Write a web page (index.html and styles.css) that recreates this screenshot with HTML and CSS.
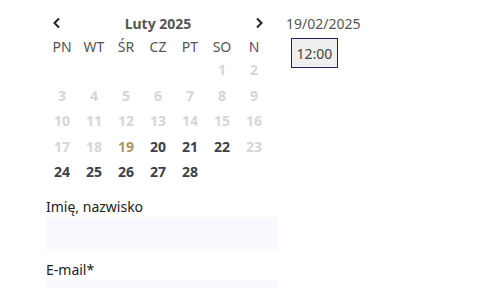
FILE: index.html
```html
<!DOCTYPE html>
<html lang="pl">
<head>
    <meta charset="UTF-8">
    <meta name="viewport" content="width=device-width, initial-scale=1.0">
    <title>Rezerwacja</title>
    <link rel="stylesheet" href="styles.css">
</head>
<body>
    <div class="booking">
        <div class="picker">
            <div class="calendar">
                <div class="cal-header">
                    <button class="nav" aria-label="Poprzedni miesiąc">
                        <svg width="10" height="12" viewBox="0 0 10 12"><path d="M7 1.5 2.5 6 7 10.5" fill="none" stroke="#222" stroke-width="2"/></svg>
                    </button>
                    <div class="month">Luty 2025</div>
                    <button class="nav" aria-label="Następny miesiąc">
                        <svg width="10" height="12" viewBox="0 0 10 12"><path d="M3 1.5 7.5 6 3 10.5" fill="none" stroke="#222" stroke-width="2"/></svg>
                    </button>
                </div>
                <div class="grid weekdays">
                    <span>PN</span><span>WT</span><span>ŚR</span><span>CZ</span><span>PT</span><span>SO</span><span>N</span>
                </div>
                <div class="grid days">
                    <span></span><span></span><span></span><span></span><span></span>
                    <span class="off">1</span><span class="off">2</span>
                    <span class="off">3</span><span class="off">4</span><span class="off">5</span><span class="off">6</span><span class="off">7</span><span class="off">8</span><span class="off">9</span>
                    <span class="off">10</span><span class="off">11</span><span class="off">12</span><span class="off">13</span><span class="off">14</span><span class="off">15</span><span class="off">16</span>
                    <span class="off">17</span><span class="off">18</span><span class="today">19</span><span>20</span><span>21</span><span>22</span><span class="off">23</span>
                    <span>24</span><span>25</span><span>26</span><span>27</span><span>28</span>
                </div>
            </div>
            <div class="slots">
                <div class="date">19/02/2025</div>
                <button class="slot">12:00</button>
            </div>
        </div>
        <form class="form">
            <label for="name">Imię, nazwisko</label>
            <input type="text" id="name">
            <label for="email">E-mail*</label>
            <input type="email" id="email">
        </form>
    </div>
</body>
</html>
```

FILE: styles.css
```css
:root {
    --text-color: #555;
    --day-color: #3d4047;
    --off-color: #d6d6d6;
    --accent-color: #ae9860;
    --field-color: #faf8ff;
}
body {
    margin: 0;
    font-family: 'Noto Sans', 'Open Sans', sans-serif;
    color: var(--text-color);
    background: #fff;
}
.booking {
    padding: 11px 0 0 46px;
}
.picker {
    display: flex;
    gap: 16px;
}
.calendar {
    width: 224px;
}
.cal-header {
    display: flex;
    align-items: center;
    justify-content: space-between;
    height: 24px;
}
.nav {
    background: none;
    border: none;
    padding: 0 6px;
    height: 24px;
    display: flex;
    align-items: center;
    cursor: pointer;
}
.month {
    font-size: 14px;
    font-weight: bold;
    color: var(--text-color);
}
.grid {
    display: grid;
    grid-template-columns: repeat(7, 32px);
    grid-auto-rows: 25.5px;
    align-items: center;
    text-align: center;
}
.weekdays {
    grid-auto-rows: 22px;
    font-size: 14px;
    color: var(--text-color);
}
.days {
    font-size: 14px;
    font-weight: bold;
    color: var(--day-color);
}
.days .off {
    color: var(--off-color);
}
.days .today {
    color: var(--accent-color);
}
.slots {
    padding-top: 3px;
}
.date {
    font-size: 14px;
    line-height: 20px;
    color: #555;
}
.slot {
    margin-top: 4px;
    margin-left: 5px;
    width: 47px;
    height: 30px;
    padding: 0;
    font-family: inherit;
    font-size: 14px;
    color: #444;
    background: #efefef;
    border: 1px solid #23205a;
}
.form {
    display: flex;
    flex-direction: column;
    width: 232px;
    margin-top: 12px;
}
.form label {
    font-size: 14px;
    line-height: 20px;
    color: #222;
}
.form input {
    height: 34px;
    border: none;
    background: var(--field-color);
    margin-bottom: 9px;
    padding: 0 8px;
    font-family: inherit;
}
```
